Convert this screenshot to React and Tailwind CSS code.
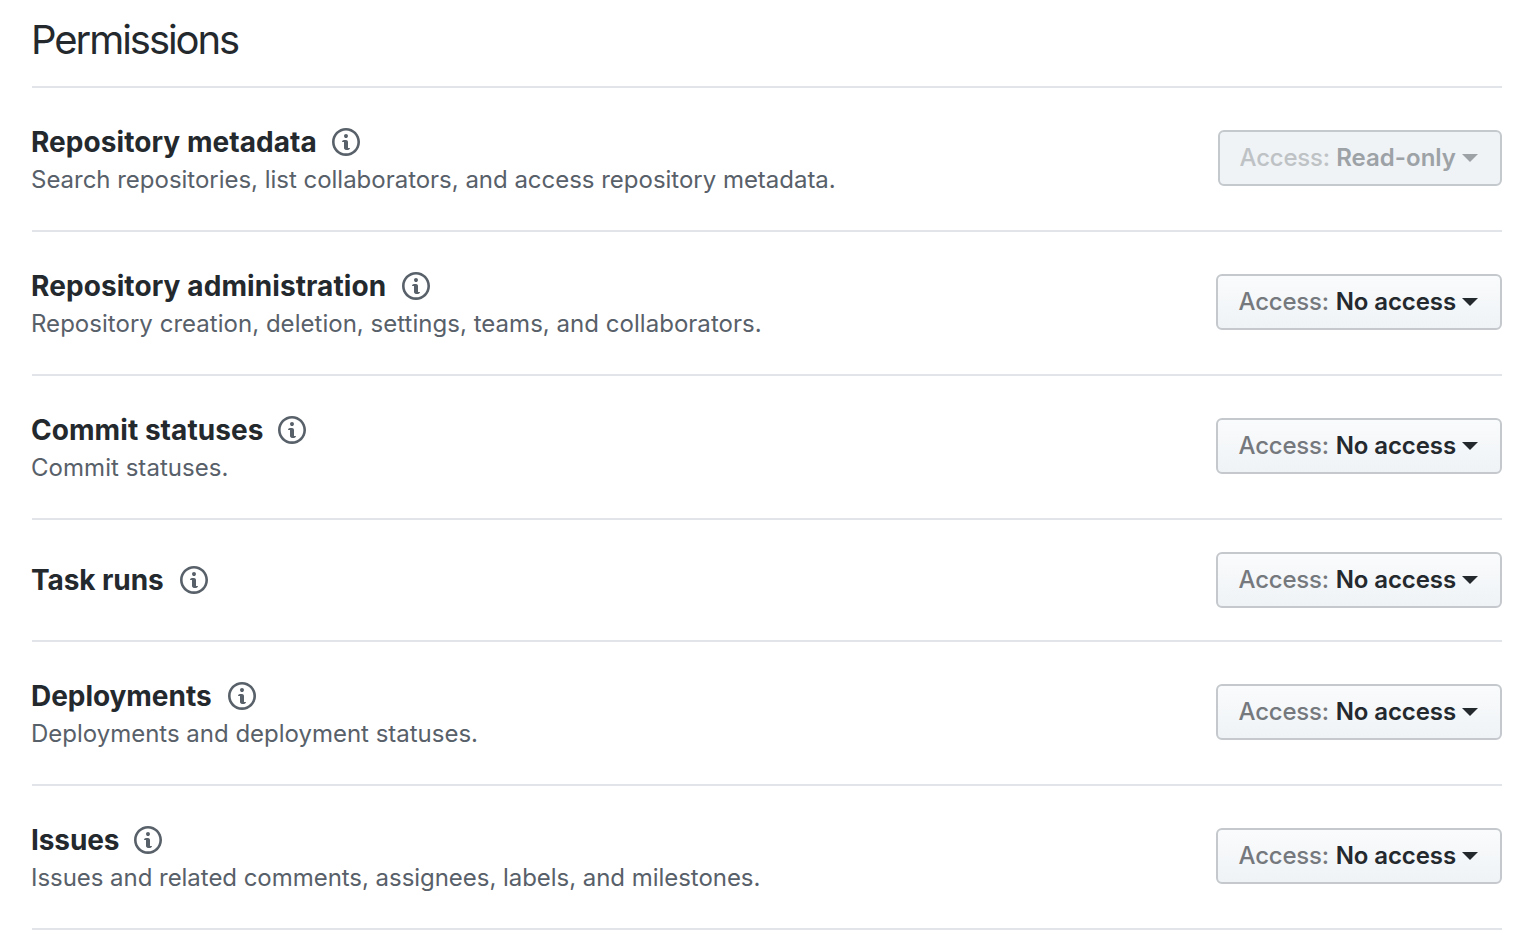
const permissions = [
  { name: "Repository metadata", nameStyle: "w-[301px] tracking-[0.06px]", note: "Search repositories, list collaborators, and access repository metadata.", noteStyle: "tracking-[-0.02px]", access: "Read-only", disabled: true },
  { name: "Repository administration", nameStyle: "w-[371px] tracking-[0.09px]", note: "Repository creation, deletion, settings, teams, and collaborators.", noteStyle: "tracking-[0.03px]", access: "No access" },
  { name: "Commit statuses", nameStyle: "w-[247px] tracking-[0.06px]", note: "Commit statuses.", noteStyle: "tracking-[0.04px]", access: "No access" },
  { name: "Task runs", nameStyle: "w-[149px] tracking-[-0.08px]", access: "No access" },
  { name: "Deployments", nameStyle: "w-[197px] tracking-[-0.05px]", note: "Deployments and deployment statuses.", noteStyle: "tracking-[-0.01px]", access: "No access" },
  { name: "Issues", nameStyle: "w-[103px] tracking-[-0.1px]", note: "Issues and related comments, assignees, labels, and milestones.", noteStyle: "tracking-[-0.04px]", access: "No access" },
];

function InfoIcon() {
  return (
    <svg className="h-8 w-7 shrink-0 fill-[#586069]" viewBox="0 0 14 16" aria-hidden="true">
      <path
        fillRule="evenodd"
        d="M6.3 5.69a.942.942 0 0 1-.28-.7c0-.28.09-.52.28-.7.19-.18.42-.28.7-.28.28 0 .52.09.7.28.18.19.28.42.28.7 0 .28-.09.52-.28.7a1 1 0 0 1-.7.3c-.28 0-.52-.11-.7-.3zM8 7.99c-.02-.25-.11-.48-.31-.69-.2-.19-.42-.3-.69-.31H6c-.27.02-.48.13-.69.31-.2.2-.3.44-.31.69h1v3c.02.27.11.5.31.69.2.2.42.31.69.31h1c.27 0 .48-.11.69-.31.2-.19.3-.42.31-.69H8V7.98v.01zM7 2.3c-3.14 0-5.7 2.54-5.7 5.68 0 3.14 2.56 5.7 5.7 5.7s5.7-2.55 5.7-5.7c0-3.15-2.56-5.69-5.7-5.69v.01zM7 .98c3.86 0 7 3.14 7 7s-3.14 7-7 7-7-3.12-7-7 3.14-7 7-7z"
      />
    </svg>
  );
}

function AccessButton({ access, disabled }) {
  return (
    <button
      disabled={disabled}
      className={
        "flex h-14 shrink-0 items-center justify-between rounded-md border-2 pr-[22px] text-2xl font-semibold whitespace-nowrap " +
        (disabled
          ? "w-[284px] border-[#c4c9ce] bg-[#eff3f6] pl-[19.5px] text-[#9da2a6]"
          : "w-[286px] border-[#c5c9cd] bg-linear-to-b from-[#fafbfc] to-[#eff3f6] pl-[20.5px] text-[#24292e]")
      }
    >
      <span className={disabled ? "font-medium tracking-[-0.2px] text-[#bec2c5]" : "font-medium tracking-[-0.2px] text-[#75797d]"}>Access:</span>
      <span className={disabled ? "ml-auto tracking-[0.02px]" : "ml-auto tracking-[-0.1px]"}>{access}</span>
      <span className="ml-1.5 h-0 w-0 border-x-8 border-t-8 border-x-transparent border-t-current" />
    </button>
  );
}

export default function App() {
  return (
    <main className="h-[952px] bg-white px-8 pr-9 font-['Inter',sans-serif] text-[#24292e]">
      <h2 className="flex h-[88px] items-center border-b-2 border-[#e1e4e8] pb-1.5 text-[40px] tracking-[-2.05px]">
        <span className="-ml-px">Permissions</span>
      </h2>
      {permissions.map((p) => (
        <section
          key={p.name}
          className={
            "flex justify-between border-b-2 border-[#e1e4e8] " +
            (p.note ? "h-36 pt-[42px]" : "h-[122px] pt-8")
          }
        >
          <div className={p.note ? "-mt-1 -ml-px" : "mt-3 -ml-px"}>
            <div className="flex h-8 items-center">
              <h3 className={"shrink-0 text-[28px] leading-8 font-[660] whitespace-nowrap " + p.nameStyle}>{p.name}</h3>
              <InfoIcon />
            </div>
            {p.note && <p className={"mt-1 text-2xl leading-9 font-[430] whitespace-nowrap text-[#586069] " + p.noteStyle}>{p.note}</p>}
          </div>
          <AccessButton access={p.access} disabled={p.disabled} />
        </section>
      ))}
    </main>
  );
}
